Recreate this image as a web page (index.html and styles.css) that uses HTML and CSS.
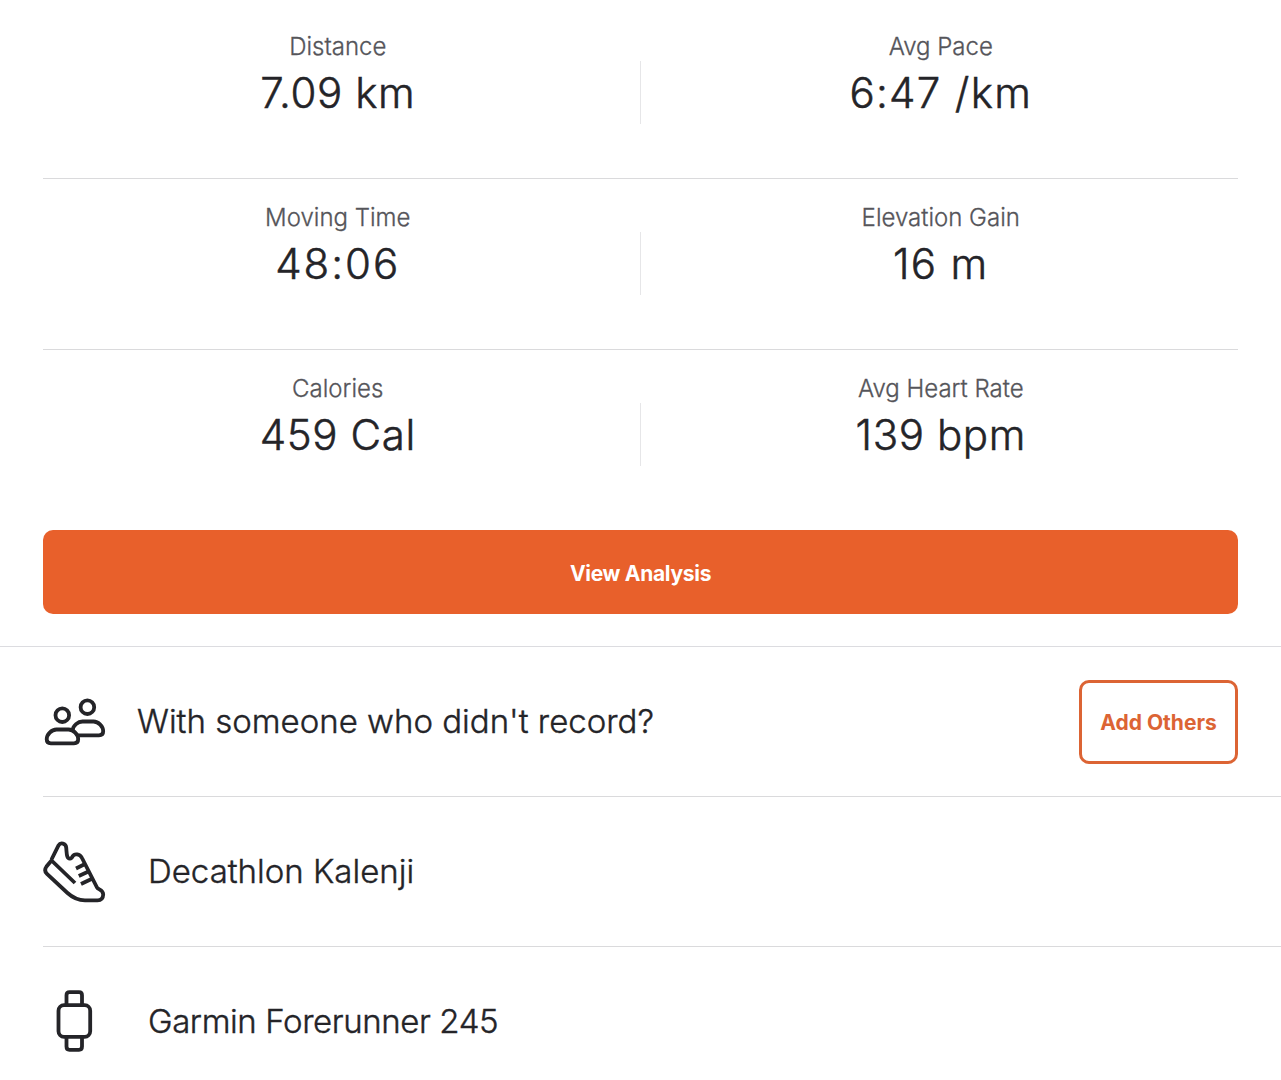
FILE: index.html
```
<!DOCTYPE html>
<html lang="en">
<head>
    <meta charset="UTF-8">
    <meta name="viewport" content="width=device-width, initial-scale=1.0">
    <title>Activity</title>
    <link rel="stylesheet" href="styles.css">
</head>
<body>
    <div class="stats">
        <div class="stat-row">
            <div class="stat">
                <div class="label">Distance</div>
                <div class="value">7.09 km</div>
            </div>
            <div class="stat">
                <div class="label">Avg Pace</div>
                <div class="value pace">6:47 /km</div>
            </div>
        </div>
        <div class="stat-row">
            <div class="stat">
                <div class="label">Moving Time</div>
                <div class="value time">48:06</div>
            </div>
            <div class="stat">
                <div class="label">Elevation Gain</div>
                <div class="value pace">16 m</div>
            </div>
        </div>
        <div class="stat-row">
            <div class="stat">
                <div class="label">Calories</div>
                <div class="value">459 Cal</div>
            </div>
            <div class="stat">
                <div class="label">Avg Heart Rate</div>
                <div class="value">139 bpm</div>
            </div>
        </div>
        <button class="analysis">View Analysis</button>
    </div>

    <div class="list">
        <div class="item others">
            <svg class="icon" viewBox="0 0 64 64">
                <circle cx="20.3" cy="25.2" r="6.8"/>
                <circle cx="45.4" cy="17.2" r="6.8"/>
                <path d="M14.500 39.500H26.500C31.500 39.500 36.200 44.500 36.200 49.300Q36.200 53.300 32 53.300H8.800Q4.700 53.300 4.700 49.300C4.700 44.500 9.500 39.500 14.500 39.500Z"/>
                <path d="M30.500 40.500C31 35.500 36 31.500 40.500 31.500H51.500C56.500 31.500 61.200 36.500 61.200 41.300Q61.200 45.300 57 45.300H36"/>
            </svg>
            <div class="name">With someone who didn't record?</div>
            <button class="add">Add Others</button>
        </div>
        <div class="item">
            <svg class="icon" viewBox="0 0 64 64">
                <path d="M9.500 19.500L16.500 5.500C18.500 2 23.800 3.300 24.200 7.500C24.600 11.500 24.500 14 25.300 16.500C26.300 19.500 29.500 19 30.500 16.500C32.500 13 38 13.800 40 18L55 47.500C56 49.800 61.200 49.500 61.200 54.500Q61 60.300 55.500 60.300H43C35 60.300 30.500 57.500 25.500 53L5 34C2.800 31.800 2.700 29 4.500 26.500L9.500 20.500L33 43"/>
                <path d="M43 24L34 28.500M46.500 31.500L36.800 36M50 38.700L39 44"/>
            </svg>
            <div class="name">Decathlon Kalenji</div>
        </div>
        <div class="item">
            <svg class="icon" viewBox="0 0 64 64">
                <rect x="16.500" y="15.200" width="31.700" height="31.600" rx="5.500"/>
                <path d="M24.500 15V5.200Q24.500 2.100 27.500 2.100H37Q40 2.100 40 5.200V15M24.500 47V56.500Q24.500 59.800 27.500 59.800H37Q40 59.800 40 56.500V47"/>
            </svg>
            <div class="name watch">Garmin Forerunner 245</div>
        </div>
    </div>
</body>
</html>
```
FILE: styles.css
```
body {
    margin: 0;
    height: 1080px;
    overflow: hidden;
    background: #fff;
    color: #242428;
    font-family: Inter, 'Liberation Sans', sans-serif;
}
button {
    font-family: inherit;
    font-weight: 700;
    font-size: 21px;
    padding: 2px 0 0;
}
.stats {
    padding: 8px 43px 32px;
    border-bottom: 1px solid #dcdce0;
}
.stat-row {
    display: grid;
    grid-template-columns: 1fr 1fr;
    height: 170px;
    border-bottom: 1px solid #dadadc;
}
.stat-row:nth-child(3) {
    border-bottom: none;
    height: 180px;
}
.stat {
    position: relative;
    padding: 23px 0 0 3px;
    text-align: center;
}
.stat:first-child {
    padding-left: 0;
    padding-right: 8px;
}
.stat:first-child::after {
    content: "";
    position: absolute;
    right: 0;
    top: 53px;
    width: 1px;
    height: 63px;
    background: #e6e6e8;
}
.label {
    font-size: 24px;
    line-height: 32px;
    font-weight: 300;
    -webkit-text-stroke: 0.3px;
    color: #55555a;
}
.value {
    font-size: 42px;
    line-height: 50px;
    margin-top: 5px;
    font-weight: 300;
    -webkit-text-stroke: 0.5px;
    letter-spacing: 0.6px;
}
.value.pace {
    letter-spacing: 1.3px;
}
.value.time {
    letter-spacing: 2px;
}
.analysis {
    display: block;
    width: 100%;
    height: 84px;
    border: none;
    border-radius: 10px;
    background: #e8602b;
    color: #fff;
    letter-spacing: -0.3px;
}
.item {
    display: flex;
    align-items: center;
    height: 149px;
    margin-left: 43px;
    padding-right: 43px;
    border-bottom: 1px solid #dadadc;
}
.item:last-child {
    border-bottom: none;
}
.icon {
    width: 64px;
    height: 64px;
    margin-left: -1px;
    flex: none;
    fill: none;
    stroke: #242428;
    stroke-width: 3.8;
}
.name {
    margin-left: 42px;
    padding-bottom: 1px;
    font-size: 33px;
    font-weight: 300;
    -webkit-text-stroke: 0.4px;
}
.name.watch {
    letter-spacing: -0.4px;
}
.others .name {
    margin-left: 31px;
}
.add {
    margin-left: auto;
    width: 159px;
    height: 84px;
    border: 3px solid #dc6434;
    border-radius: 10px;
    background: #fff;
    color: #dc6434;
}
```
